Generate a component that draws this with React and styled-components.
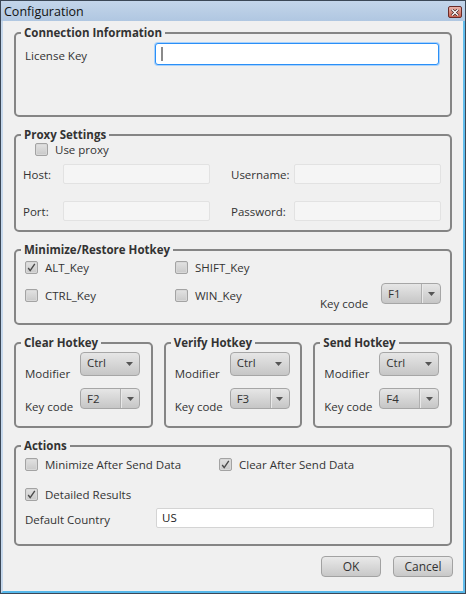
import React from 'react';
import styled, { createGlobalStyle } from 'styled-components';

const GlobalStyle = createGlobalStyle`
    html, body {
        margin: 0;
        padding: 0;
        background: #f0f0f0;
    }
    body {
        font-family: "Open Sans", "Noto Sans", sans-serif;
        font-size: 11.5px;
        color: #333;
    }
`;

const Window = styled.div`
    width: 466px;
    height: 594px;
    box-sizing: border-box;
    display: flex;
    flex-direction: column;
    border: 1px solid #3b4756;
    background: #b9cfe6;
`;

const TitleBar = styled.div`
    height: 20px;
    flex-shrink: 0;
    display: flex;
    align-items: center;
    justify-content: space-between;
    padding: 0 3px 0 3px;
    background: linear-gradient(#c3d5ea, #b0c7e1);
`;

const Title = styled.span`
    font-size: 12.5px;
    color: #111;
`;

const CloseButton = styled.div`
    width: 14px;
    height: 12px;
    margin-top: 2px;
    box-sizing: border-box;
    border: 1px solid #6a2b28;
    border-radius: 2px;
    background: linear-gradient(#e9b3aa, #c8604f);
    display: flex;
    align-items: center;
    justify-content: center;
`;

const Frame = styled.div`
    flex: 1;
    display: flex;
    flex-direction: column;
    gap: 10px;
    padding: 4px 11px 0 11px;
    background: #f0f0f0;
    border-left: 2px solid #c6d8ec;
    border-right: 2px solid #62bdec;
    border-bottom: 2px solid #56b8ea;
`;

const Group = styled.fieldset`
    margin: 0;
    padding: 0;
    min-width: 0;
    border: 2px solid #858585;
    border-radius: 5px;
    box-sizing: border-box;
`;

const Legend = styled.legend`
    margin-left: 5px;
    padding: 0 3px;
    font-weight: bold;
    line-height: 15px;
    color: #333;
`;

const ConnectionBody = styled.div`
    height: 75px;
    box-sizing: border-box;
    padding: 3px 11px 0 9px;
    display: grid;
    grid-template-columns: 130px 1fr;
    align-items: start;
`;

const RowLabel = styled.span`
    line-height: 22px;
    margin-top: ${p => p.$shift || 0}px;
`;

const FocusField = styled.div`
    height: 22px;
    box-sizing: border-box;
    border: 1px solid #2a8ff7;
    box-shadow: 0 0 0 1px #a9d2fb;
    border-radius: 3px;
    background: #fff;
    display: flex;
    align-items: center;
    padding-left: 5px;
`;

const Caret = styled.span`
    width: 2px;
    height: 14px;
    background: #8a8a8a;
`;

const ProxyBody = styled.div`
    height: 88px;
    box-sizing: border-box;
    padding: 1px 9px 0 7px;
    display: flex;
    flex-direction: column;
    gap: 7px;
`;

const ProxyGrid = styled.div`
    display: grid;
    grid-template-columns: 40px 147px 84px 147px;
    row-gap: 15px;
    align-items: center;
`;

const Spacer = styled.span``;

const DisabledField = styled.div`
    height: 20px;
    box-sizing: border-box;
    border: 1px solid #e2e2e2;
    border-radius: 2px;
    background: #f5f5f5;
`;

const FieldLabel = styled.span`
    line-height: 20px;
    padding-top: 2px;
    padding-left: ${p => p.$gapLeft ? 21 : 0}px;
`;

const CheckRow = styled.label`
    display: flex;
    align-items: center;
    gap: 7px;
    height: 13px;
    line-height: 13px;
    margin-left: ${p => p.$indent || 0}px;
    align-self: ${p => p.$align || 'auto'};
    margin-bottom: ${p => p.$bottom || 0}px;
`;

const Box = styled.span`
    width: 13px;
    height: 13px;
    flex-shrink: 0;
    box-sizing: border-box;
    border: 1px solid #a3a3a3;
    border-radius: 2px;
    background: linear-gradient(#e2e2e2, #c9c9c9);
    box-shadow: inset 0 0 0 1px #d8d8d8;
    display: flex;
    align-items: center;
    justify-content: center;
`;

const HotkeyBody = styled.div`
    height: 66px;
    box-sizing: border-box;
    padding: 4px 0 0 9px;
    display: grid;
    grid-template-columns: 150px 145px 61px 60px;
    grid-template-rows: 13px 21px;
    row-gap: 9px;
`;

const BottomLabel = styled.span`
    align-self: end;
    line-height: 15px;
    margin-bottom: ${p => p.$drop || -4}px;
`;

const Combo = styled.div`
    height: ${p => p.$tall ? 24 : 21}px;
    box-sizing: border-box;
    border: 1px solid #a6a6a6;
    border-radius: 4px;
    background: linear-gradient(#e6e6e6, #c6c6c6);
    display: flex;
    align-items: center;
    padding-left: 6px;
    color: #333;
`;

const ComboText = styled.span`
    flex: 1;
    margin-top: ${p => p.$up ? -3 : 0}px;
`;

const ComboArrow = styled.span`
    width: ${p => p.$split ? 18 : 20}px;
    align-self: stretch;
    display: flex;
    align-items: center;
    justify-content: center;
    border-left: ${p => p.$split ? '1px solid #b0b0b0' : 'none'};
    box-shadow: ${p => p.$split ? 'inset 1px 0 0 #e9e9e9' : 'none'};
`;

const HotkeyRow = styled.div`
    display: grid;
    grid-template-columns: repeat(3, 1fr);
    column-gap: 11px;
`;

const SmallBody = styled.div`
    height: 76px;
    box-sizing: border-box;
    padding: 2px 0 0 9px;
    display: grid;
    grid-template-columns: 55px 60px;
    grid-template-rows: 24px 21px;
    row-gap: 12px;
`;

const ActionsBody = styled.div`
    height: 91px;
    box-sizing: border-box;
    padding: 5px 16px 0 9px;
    display: flex;
    flex-direction: column;
`;

const ActionRow = styled.div`
    display: flex;
    margin-bottom: ${p => p.$bottom || 0}px;
`;

const Column = styled.div`
    width: ${p => p.$width}px;
`;

const CountryRow = styled.div`
    display: grid;
    grid-template-columns: 131px 1fr;
    align-items: center;
`;

const TextField = styled.div`
    height: 20px;
    box-sizing: border-box;
    border: 1px solid #d4d4d4;
    border-radius: 2px;
    background: #fff;
    padding-left: 5px;
    line-height: 18px;
    color: #222;
`;

const ButtonBar = styled.div`
    display: flex;
    justify-content: flex-end;
    gap: 12px;
    margin-right: -1px;
`;

const Button = styled.button`
    width: 60px;
    height: 21px;
    padding: 0;
    border: 1px solid #a2a2a2;
    border-radius: 4px;
    background: linear-gradient(#e9e9e9, #c8c8c8);
    font-family: inherit;
    font-size: 12px;
    color: #333;
`;

const Check = ({ checked }) => (
    <Box>
        {checked && (
            <svg width="9" height="9" viewBox="0 0 9 9">
                <path d="M1.2 5 L3.2 7.6 L7.8 0.8" fill="none" stroke="#4a4a4a" strokeWidth="1.4" />
            </svg>
        )}
    </Box>
);

const Checkbox = ({ checked, children, ...rest }) => (
    <CheckRow {...rest}>
        <Check checked={checked} />
        <span>{children}</span>
    </CheckRow>
);

const Arrow = () => (
    <svg width="7" height="4" viewBox="0 0 7 4">
        <path d="M0 0 H7 L3.5 4 Z" fill="#555" />
    </svg>
);

const Select = ({ value, split, tall }) => (
    <Combo $tall={tall}>
        <ComboText $up={tall}>{value}</ComboText>
        <ComboArrow $split={split}><Arrow /></ComboArrow>
    </Combo>
);

const HotkeyGroup = ({ title, keyCode }) => (
    <Group>
        <Legend>{title}</Legend>
        <SmallBody>
            <BottomLabel $drop={-5}>Modifier</BottomLabel>
            <Select value="Ctrl" tall />
            <BottomLabel $drop={-5}>Key code</BottomLabel>
            <Select value={keyCode} split />
        </SmallBody>
    </Group>
);

export default function App() {
    return (
        <>
            <GlobalStyle />
            <Window>
                <TitleBar>
                    <Title>Configuration</Title>
                    <CloseButton>
                        <svg width="8" height="7" viewBox="0 0 8 7">
                            <path d="M1 0.5 L7 6.5 M7 0.5 L1 6.5" stroke="#3a1a1a" strokeWidth="2.6" />
                            <path d="M1 0.5 L7 6.5 M7 0.5 L1 6.5" stroke="#fff" strokeWidth="1.4" />
                        </svg>
                    </CloseButton>
                </TitleBar>
                <Frame>
                    <Group>
                        <Legend>Connection Information</Legend>
                        <ConnectionBody>
                            <RowLabel $shift={2}>License Key</RowLabel>
                            <FocusField><Caret /></FocusField>
                        </ConnectionBody>
                    </Group>

                    <Group>
                        <Legend>Proxy Settings</Legend>
                        <ProxyBody>
                            <Checkbox $indent={12}>Use proxy</Checkbox>
                            <ProxyGrid>
                                <FieldLabel>Host:</FieldLabel>
                                <DisabledField />
                                <FieldLabel $gapLeft>Username:</FieldLabel>
                                <DisabledField />
                                <FieldLabel>Port:</FieldLabel>
                                <DisabledField />
                                <FieldLabel $gapLeft>Password:</FieldLabel>
                                <DisabledField />
                            </ProxyGrid>
                        </ProxyBody>
                    </Group>

                    <Group>
                        <Legend>Minimize/Restore Hotkey</Legend>
                        <HotkeyBody>
                            <Checkbox checked>ALT_Key</Checkbox>
                            <Checkbox>SHIFT_Key</Checkbox>
                            <Spacer />
                            <Spacer />
                            <Checkbox $align="end" $bottom={2}>CTRL_Key</Checkbox>
                            <Checkbox $align="end" $bottom={2}>WIN_Key</Checkbox>
                            <BottomLabel $drop={-7}>Key code</BottomLabel>
                            <Select value="F1" split />
                        </HotkeyBody>
                    </Group>

                    <HotkeyRow>
                        <HotkeyGroup title="Clear Hotkey" keyCode="F2" />
                        <HotkeyGroup title="Verify Hotkey" keyCode="F3" />
                        <HotkeyGroup title="Send Hotkey" keyCode="F4" />
                    </HotkeyRow>

                    <Group>
                        <Legend>Actions</Legend>
                        <ActionsBody>
                            <ActionRow $bottom={17}>
                                <Column $width={194}>
                                    <Checkbox>Minimize After Send Data</Checkbox>
                                </Column>
                                <Column>
                                    <Checkbox checked>Clear After Send Data</Checkbox>
                                </Column>
                            </ActionRow>
                            <ActionRow $bottom={4}>
                                <Checkbox checked>Detailed Results</Checkbox>
                            </ActionRow>
                            <CountryRow>
                                <RowLabel $shift={4}>Default Country</RowLabel>
                                <TextField>US</TextField>
                            </CountryRow>
                        </ActionsBody>
                    </Group>

                    <ButtonBar>
                        <Button>OK</Button>
                        <Button>Cancel</Button>
                    </ButtonBar>
                </Frame>
            </Window>
        </>
    );
}
